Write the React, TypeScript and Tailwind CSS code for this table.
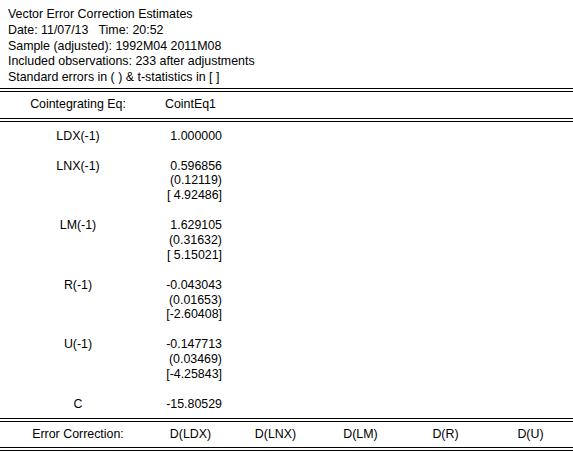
import React from "react";

type Row = { label?: string; value?: string };

const body: Row[] = [
  { label: "LDX(-1)", value: "1.000000" },
  {},
  { label: "LNX(-1)", value: "0.596856" },
  { value: "(0.12119)" },
  { value: "[ 4.92486]" },
  {},
  { label: "LM(-1)", value: "1.629105" },
  { value: "(0.31632)" },
  { value: "[ 5.15021]" },
  {},
  { label: "R(-1)", value: "-0.043043" },
  { value: "(0.01653)" },
  { value: "[-2.60408]" },
  {},
  { label: "U(-1)", value: "-0.147713" },
  { value: "(0.03469)" },
  { value: "[-4.25843]" },
  {},
  { label: "C", value: "-15.80529" },
];

function DoubleLine() {
  return <div className="h-[4px] w-full border-t border-b border-black" />;
}

export default function App() {
  return (
    <div
      className="w-[573px] h-[452px] bg-white text-black text-[12.4px] overflow-hidden"
      style={{ fontFamily: '"Liberation Sans", Arial, sans-serif' }}
    >
      <div className="pl-[8px] pt-[7px] leading-[15.75px]">
        <div>Vector Error Correction Estimates</div>
        <div>Date: 11/07/13&nbsp;&nbsp; Time: 20:52</div>
        <div>Sample (adjusted): 1992M04 2011M08</div>
        <div>Included observations: 233 after adjustments</div>
        <div>Standard errors in ( ) &amp; t-statistics in [ ]</div>
      </div>
      <div className="mt-[2px]">
        <DoubleLine />
      </div>
      <div className="flex h-[26px] items-center pl-[8px]">
        <div className="w-[140px] text-center">Cointegrating Eq:</div>
        <div className="w-[85px] text-center">CointEq1</div>
      </div>
      <DoubleLine />
      <div className="pt-[7px] pl-[8px] flex flex-col">
        {body.map((r, i) => (
          <div key={i} className="flex h-[14.9px] items-center leading-[14.9px]">
            <div className="w-[140px] text-center">{r.label ?? ""}</div>
            <div className="w-[85px] text-right pr-[11px] whitespace-pre">{r.value ?? ""}</div>
          </div>
        ))}
      </div>
      <div className="mt-[6px]">
        <DoubleLine />
      </div>
      <div className="flex h-[25px] items-center pl-[8px]">
        <div className="w-[140px] text-center">Error Correction:</div>
        <div className="w-[85px] text-center">D(LDX)</div>
        <div className="w-[85px] text-center">D(LNX)</div>
        <div className="w-[85px] text-center">D(LM)</div>
        <div className="w-[85px] text-center">D(R)</div>
        <div className="w-[85px] text-center">D(U)</div>
      </div>
      <DoubleLine />
    </div>
  );
}
